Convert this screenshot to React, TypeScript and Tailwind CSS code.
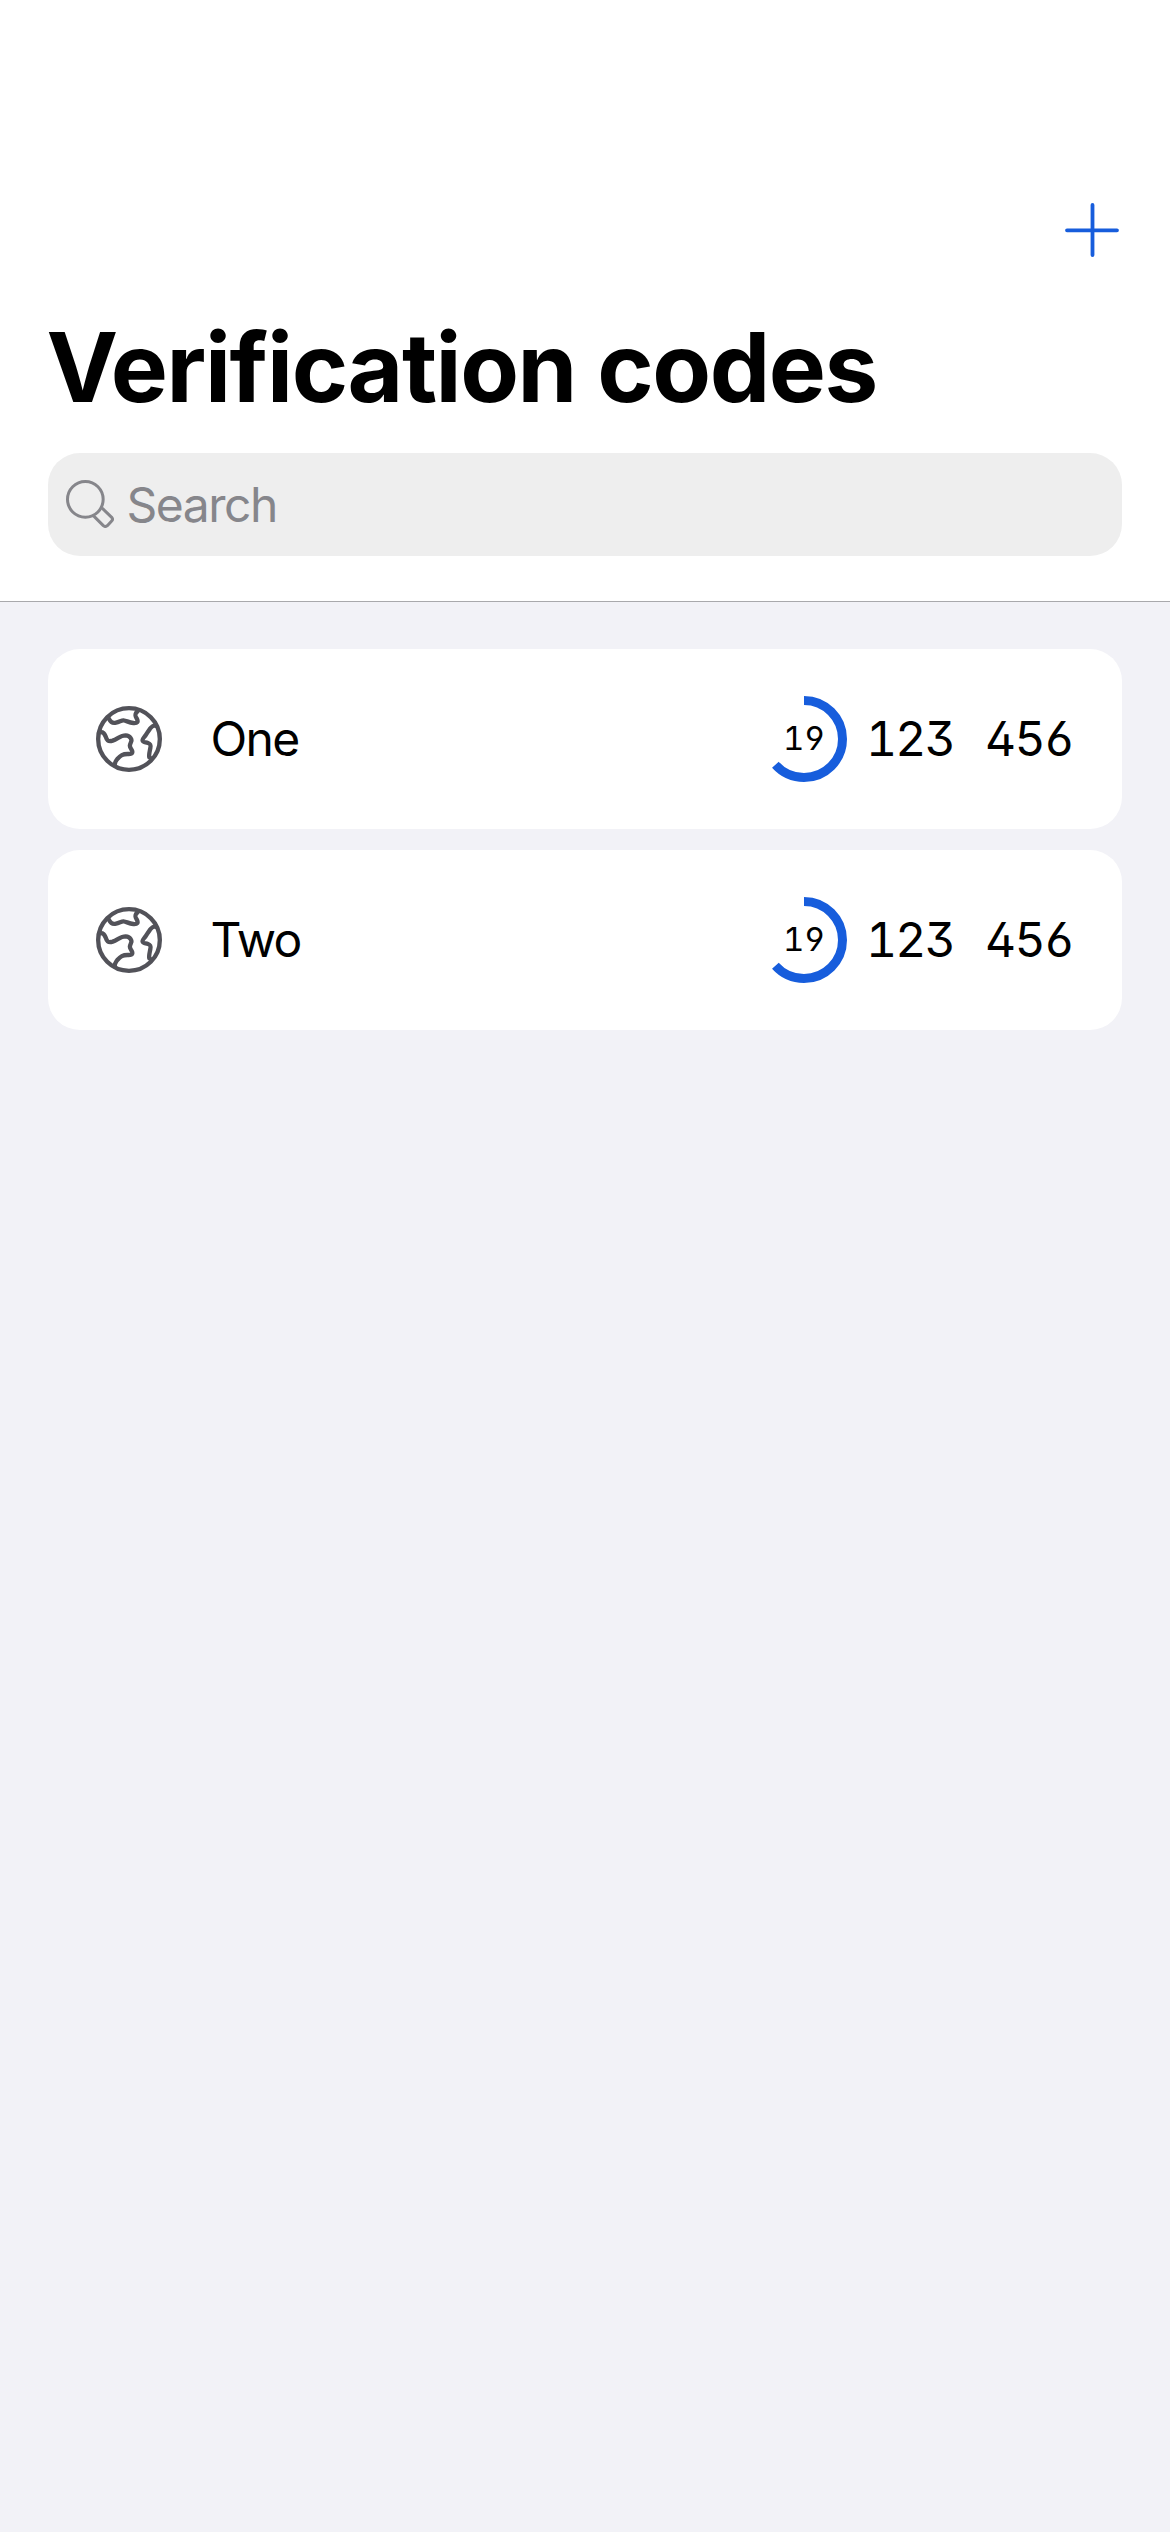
const entries = [
  { name: "One", code: "123 456", remaining: 19 },
  { name: "Two", code: "123 456", remaining: 19 },
];

const PERIOD = 30;

function PlusIcon() {
  return (
    <svg className="size-[54px]" viewBox="0 0 54 54" fill="none" stroke="#175ddc" strokeWidth="3.8" strokeLinecap="round">
      <path d="M27.5 2v50M2 27.3h50" />
    </svg>
  );
}

function SearchIcon() {
  return (
    <svg className="mb-[2px] size-[48px]" viewBox="78 120 144 144" fill="none" stroke="#86868b" strokeWidth="9" strokeLinejoin="round" strokeLinecap="round">
      <circle cx="136" cy="178" r="53.5" />
      <path d="M188 206L215 232Q220 238 215 243L202 257Q196 262 190 257L163 230" />
    </svg>
  );
}

function GlobeIcon() {
  return (
    <svg className="size-[66px]" viewBox="48 48 198 198" fill="none" stroke="#525259" strokeWidth="13" strokeLinejoin="round" strokeLinecap="round">
      <circle cx="147" cy="147" r="92.5" />
      <path d="M84 82C91 95 96 101 108 98C118 96 126 90 131 91C139 92 147 98 160 99C173 100 175 96 171 87C166 78 164 76 168 69L175 61" />
      <path d="M58 127C72 124 74 133 78 142C82 155 88 155 98 152C113 147 121 136 137 136C151 137 157 149 153 156C149 166 148 168 153 176C160 186 158 192 146 192C128 191 121 197 112 207C107 214 104 216 104 226" />
      <path d="M227 108C222 105 216 109 210 116C205 123 201 130 196 137C189 146 186 148 188 152C190 158 196 156 204 159C212 162 213 165 211 174C209 185 206 195 208 202L214 205" />
    </svg>
  );
}

function Countdown({ seconds }: { seconds: number }) {
  return (
    <div className="grid size-[86px] place-items-center">
      <svg className="col-start-1 row-start-1 size-[86px] -rotate-90" viewBox="0 0 86 86" fill="none">
        <circle cx="43" cy="43" r="38.5" stroke="#175ddc" strokeWidth="9" pathLength={PERIOD} strokeDasharray={`${seconds} ${PERIOD}`} />
      </svg>
      <span className="col-start-1 row-start-1 pb-[2px] text-[33px] leading-none tracking-[-0.3px] [font-feature-settings:'tnum','ss01']">{seconds}</span>
    </div>
  );
}

export default function App() {
  return (
    <div className="flex min-h-[2532px] w-[1170px] flex-col bg-[#f2f2f7] font-['Inter',sans-serif] text-black">
      <header className="flex h-[602px] flex-col border-b border-[#a9a9ac] bg-white px-12 pt-[203px]">
        <div className="flex justify-end pr-[3px]">
          <button aria-label="Add"><PlusIcon /></button>
        </div>
        <h1 className="mt-[52px] -ml-[1.5px] h-[116px] whitespace-nowrap text-[96px] leading-[116px] font-bold tracking-[-1.45px]">Verification codes</h1>
        <div className="mt-[28px] flex h-[103px] items-center rounded-[32px] bg-[#eeeeee] pl-[18px] text-[#86868b]">
          <SearchIcon />
          <span className="ml-[12.5px] text-[48px] leading-none tracking-[-1.5px]">Search</span>
        </div>
      </header>
      <main className="flex flex-col gap-[21px] px-12 pt-[47px]">
        {entries.map((entry) => (
          <div key={entry.name} className="flex h-[180px] items-center rounded-[32px] bg-white pr-[47px] pl-[48px]">
            <GlobeIcon />
            <span className="ml-[48.5px] flex-1 text-[48px] leading-none tracking-[-1.7px]">{entry.name}</span>
            <Countdown seconds={entry.remaining} />
            <span className="ml-[19px] w-[209px] whitespace-nowrap text-[48px] leading-none tracking-[-1.8px] [word-spacing:20px] [font-feature-settings:'tnum','ss01']">{entry.code}</span>
          </div>
        ))}
      </main>
    </div>
  );
}
